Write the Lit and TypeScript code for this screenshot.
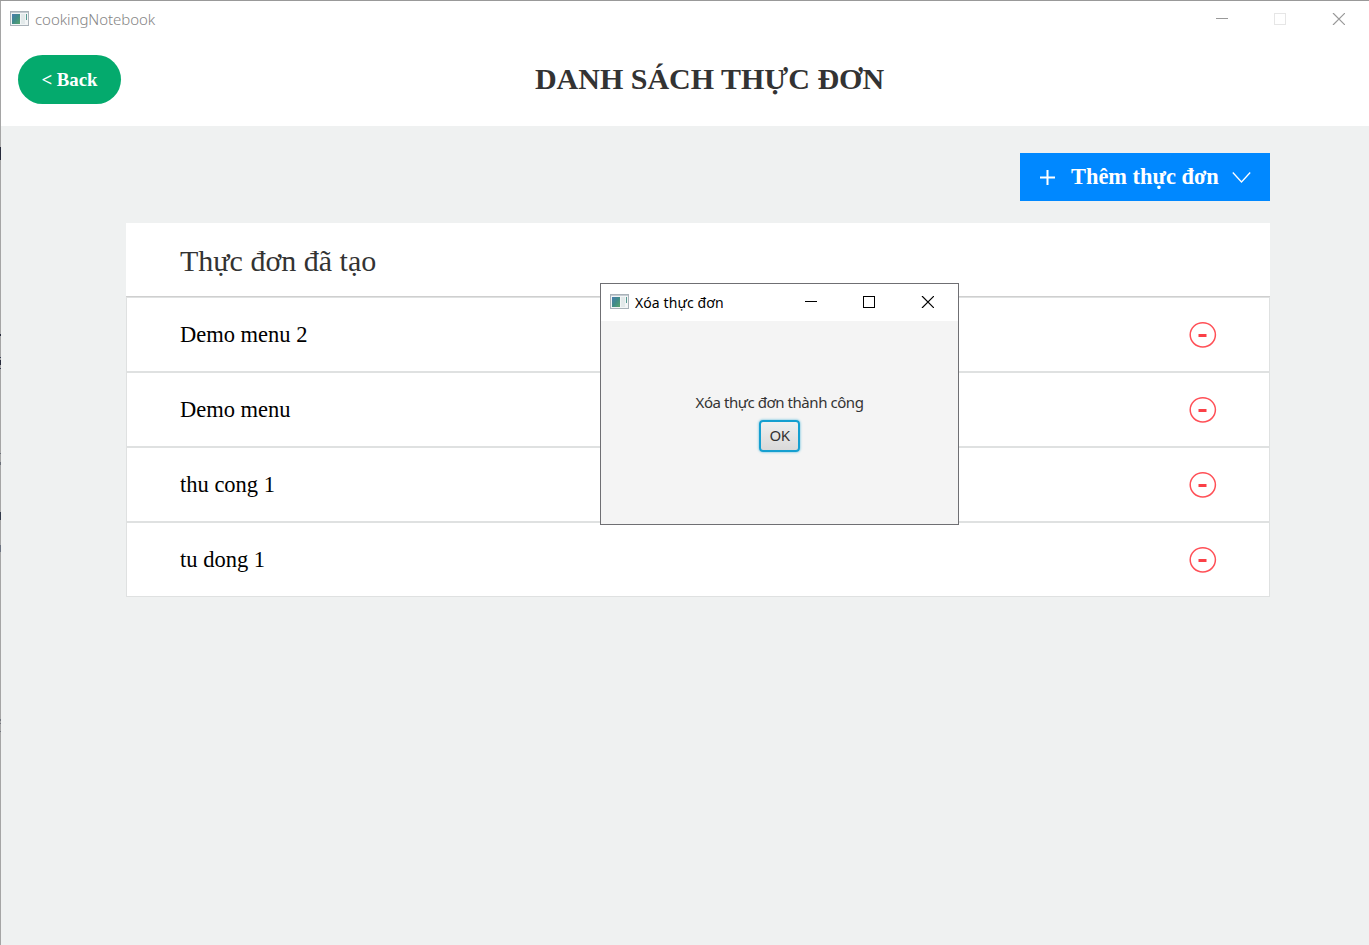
import { LitElement, html, css, svg } from "lit";
import { customElement, property } from "lit/decorators.js";

@customElement("app-glyph")
class AppGlyph extends LitElement {
  static styles = css`
    :host { display: block; width: 19px; height: 15px; }
    svg { display: block; }
  `;
  render() {
    return html`<svg width="19" height="15" viewBox="0 0 19 15">
      <defs>
        <linearGradient id="g" x1="0" y1="0" x2="1" y2="1">
          <stop offset="0" stop-color="#4a7bb0" />
          <stop offset="0.5" stop-color="#3f8c88" />
          <stop offset="1" stop-color="#5aa56c" />
        </linearGradient>
      </defs>
      <rect x="0.5" y="0.5" width="18" height="14" fill="#f2f5f6" stroke="#a9b2b9" />
      <rect x="1" y="1" width="17" height="1" fill="#c5ccd2" />
      <rect x="2" y="3" width="8" height="10" fill="url(#g)" />
      <rect x="11" y="3" width="4" height="10" fill="#e2e9ea" />
      <rect x="16" y="3" width="1" height="6" fill="#579a91" />
    </svg>`;
  }
}

@customElement("window-controls")
class WindowControls extends LitElement {
  @property({ type: Boolean }) inactive = false;
  static styles = css`
    :host { display: block; width: 129px; height: 12px; }
    svg { display: block; }
  `;
  render() {
    const c = this.inactive ? "#999999" : "#000000";
    const box = this.inactive ? "#e6e6e6" : "#000000";
    return html`<svg width="129" height="12" viewBox="0 0 129 12" fill="none">
      ${svg`<path d="M0 5.5H12" stroke=${c} shape-rendering="crispEdges" />
      <rect x="58.5" y="0.5" width="11" height="11" stroke=${box} />
      <path d="M117 0L129 12M129 0L117 12" stroke=${c} stroke-width="1.2" />`}
    </svg>`;
  }
}

@customElement("app-root")
class AppRoot extends LitElement {
  menus = ["Demo menu 2", "Demo menu", "thu cong 1", "tu dong 1"];

  static styles = css`
    :host {
      display: block; position: relative; box-sizing: border-box;
      width: 1369px; height: 945px; overflow: hidden;
      background: #eff1f1; border-top: 1px solid #999;
      font-family: "Liberation Serif", serif;
    }
    * { box-sizing: border-box; }
    .edge {
      position: absolute; left: 0; top: 0; width: 1px; height: 944px;
      background: linear-gradient(#0000 146px, #272b3c 146px 159px, #0000 159px 333px,
        #272b3c 333px 335px, #0000 335px 356px, #394056 356px 357px, #0000 357px 359px,
        #272b3c 359px 364px, #0000 364px 367px, #394056 367px 368px, #0000 368px 452px,
        #6b7079 452px 453px, #0000 453px 461px, #6b7079 461px 464px, #0000 464px 511px,
        #333b4b 511px 519px, #0000 519px 544px, #6b7280 544px 551px, #0000 551px 718px,
        #737780 718px 720px, #0000 720px 722px, #737780 722px 723px, #0000 723px 730px,
        #737780 730px 731px, #0000 731px), #a5a5a5;
    }
    .titlebar {
      display: flex; align-items: center; height: 37px; padding: 0 24px 2px 10px;
      background: #fff; font-family: "Noto Sans", sans-serif; font-size: 15px; color: #858585;
    }
    .name { flex: 1; padding-left: 6px; white-space: nowrap; font-weight: 300; letter-spacing: -0.05px; }
    .header {
      display: grid; grid-template-columns: 103px 1fr 103px; align-items: start;
      height: 88px; padding: 17px 18px 0; background: #fff;
    }
    .back {
      height: 49px; border: 0; border-radius: 25px; background: #04aa6d; color: #fff;
      font: bold 18.8px "Liberation Serif", serif; padding: 0;
    }
    h1 {
      margin: 0; padding-left: 50px; text-align: center; font-size: 30px; line-height: 47px;
      color: #333; white-space: nowrap;
    }
    .content { padding: 27px 99px 0 126px; display: flex; flex-direction: column; }
    .add {
      align-self: flex-end; display: flex; align-items: center; width: 250px; height: 48px;
      padding: 0 19px 0 20px; border: 0; background: #0088ff; color: #fff;
      font: bold 22.4px "Liberation Serif", serif;
    }
    .add svg { flex: none; }
    .add span { flex: 1; text-align: left; padding-left: 16px; white-space: nowrap; }
    .list { margin-top: 22px; }
    .caption {
      height: 74px; padding: 0 54px; background: #fff; border-bottom: 1px solid #cfcfcf;
      font-size: 30px; line-height: 76px; color: #333;
    }
    .row {
      display: flex; align-items: center; justify-content: space-between; height: 75px;
      padding: 0 52px 0 53px; background: #fff; border: 1px solid #dfe1e1;
      font-size: 22.5px; color: #000;
    }
    .row span { padding-top: 1px; }
    .row svg { display: block; }
    .dialog {
      position: absolute; left: 600px; top: 282px; width: 359px; height: 242px;
      border: 1px solid #6f6f73; background: #f4f4f4; font-family: "Noto Sans", sans-serif;
    }
    .dialog .titlebar { color: #000; padding: 0 24px 2px 9px; }
    .dialog .name { padding: 1px 0 0 6px; font-weight: 400; font-size: 14px; letter-spacing: 0.1px; }
    .body { display: flex; flex-direction: column; align-items: center; padding-top: 70px; }
    .message {
      font-size: 15px; line-height: 22px; letter-spacing: -0.44px; color: #333; white-space: nowrap;
    }
    .ok {
      margin-top: 7px; width: 41px; height: 32px; padding: 0 0 2px; border: 2px solid #159fd0;
      border-radius: 4px; background: linear-gradient(#f0f0f0, #d9d9d9); color: #333;
      box-shadow: 0 0 2px 1px #a9d8e8; font: 15px "Noto Sans", sans-serif; letter-spacing: -0.4px;
    }
  `;

  render() {
    return html`
      <div class="titlebar">
        <app-glyph></app-glyph><div class="name">cookingNotebook</div>
        <window-controls inactive></window-controls>
      </div>
      <div class="header">
        <button class="back">&lt; Back</button>
        <h1><span>DANH SÁCH THỰC ĐƠN</span></h1>
      </div>
      <div class="content">
        <button class="add">
          <svg width="15" height="15" viewBox="0 0 15 15"><path d="M0 7.5H15M7.5 0V15" stroke="#fff" stroke-width="2" /></svg>
          <span>Thêm thực đơn</span>
          <svg width="19" height="12" viewBox="0 0 19 12"><path d="M0.8 1.5L9.5 11L18.2 1.5" fill="none" stroke="#fff" stroke-width="1.3" /></svg>
        </button>
        <div class="list">
          <div class="caption"><span>Thực đơn đã tạo</span></div>
          ${this.menus.map((m) => html`<div class="row"><span>${m}</span>
            <svg width="28" height="27" viewBox="0 0 28 27">
              <ellipse cx="13.8" cy="13.8" rx="12.6" ry="12.1" fill="none" stroke="#ff5057" stroke-width="1.5" />
              <rect x="9.5" y="13" width="8" height="3" fill="#fb4047" />
            </svg></div>`)}
        </div>
      </div>
      <div class="edge"></div>
      <div class="dialog">
        <div class="titlebar">
          <app-glyph></app-glyph><div class="name">Xóa thực đơn</div>
          <window-controls></window-controls>
        </div>
        <div class="body">
          <div class="message">Xóa thực đơn thành công</div>
          <button class="ok">OK</button>
        </div>
      </div>
    `;
  }
}
